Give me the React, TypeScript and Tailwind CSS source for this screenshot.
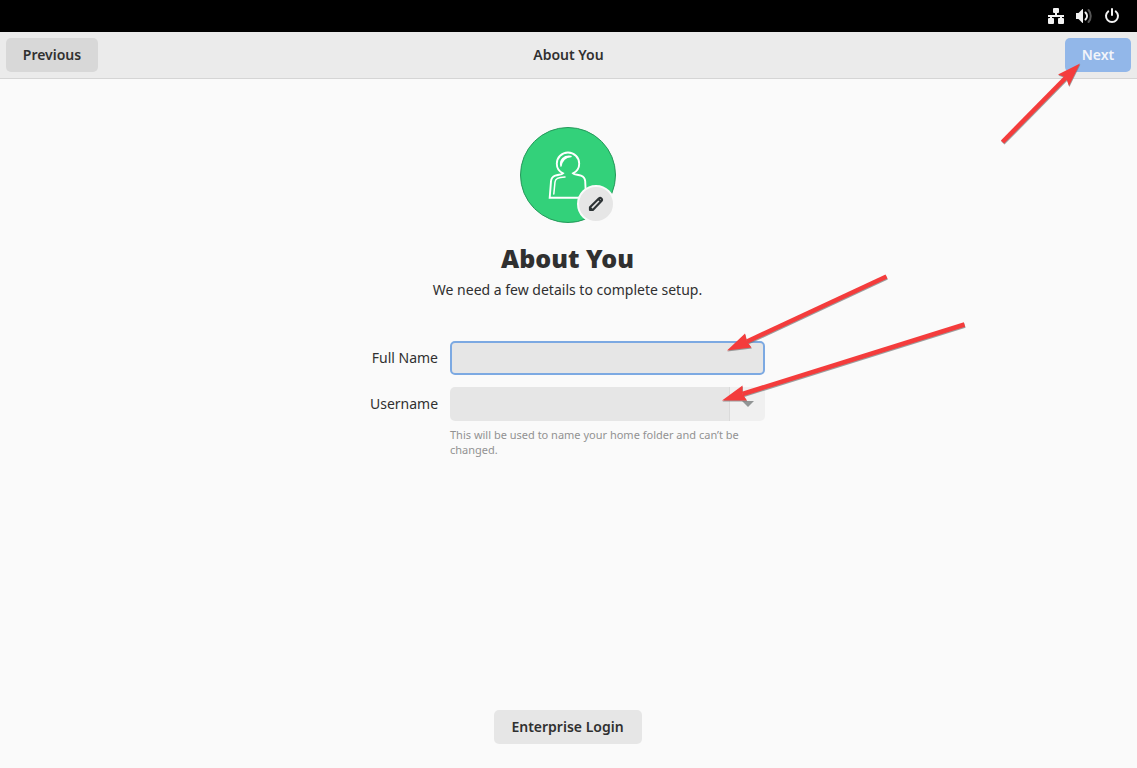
import React from "react";

function NetworkIcon() {
  return (
    <svg width="16" height="16" viewBox="0 0 16 16" fill="#f2f2f2" aria-hidden="true">
      <rect x="5" y="0" width="6" height="5" rx="1" />
      <rect x="0" y="10" width="6" height="6" rx="1" />
      <rect x="10" y="10" width="6" height="6" rx="1" />
      <path d="M7 5h2v2h7v2h-2v1h-2V9H4v1H2V9H0V7h7z" />
    </svg>
  );
}

function VolumeIcon() {
  return (
    <svg width="16" height="16" viewBox="0 0 16 16" fill="none" aria-hidden="true">
      <path d="M0 5h2.500L6.500 1H7v14h-.5L2.500 11H0z" fill="#f2f2f2" />
      <path d="M9.500 4.500c2 2 2 5 0 7" stroke="#f2f2f2" strokeWidth="2" strokeLinecap="round" />
      <path d="M12.500 2c3 3.400 3 8.600 0 12" stroke="#565656" strokeWidth="2" strokeLinecap="round" />
    </svg>
  );
}

function PowerIcon() {
  return (
    <svg width="16" height="16" viewBox="0 0 16 16" fill="none" stroke="#f2f2f2" strokeWidth="2" strokeLinecap="round" aria-hidden="true">
      <path d="M4.200 3.400a6 6 0 1 0 7.600 0M8 1v6" />
    </svg>
  );
}

function Person() {
  return (
    <svg className="h-full w-full" viewBox="0 0 96 96" fill="none" stroke="white" aria-hidden="true">
      <circle cx="48" cy="48" r="47.500" fill="#33d17a" stroke="#25985a" />
      <path
        d="M43 46.300C39 44.300 36.800 41 36.800 36.700a11.200 11.200 0 0 1 22.400 0c0 4.300-2.200 7.600-6.200 9.600 1.500 1.600 5 1.200 8 2.400 3 1.200 4 3 4.200 5.500L66 70.700H29.700L31 54.200c.2-2.500 1.200-4.300 4.200-5.500 3-1.200 6.300-.8 7.800-2.400z"
        strokeWidth="1.900"
        strokeLinejoin="miter"
      />
      <path d="M41 39c-1.500-6 3-10.500 10-9.500-5 .5-9 3.500-10 9.500zM33.800 67l1.200-12c.3-3.500 3-4.500 10-5" strokeWidth="1.500" strokeLinecap="round" strokeLinejoin="round" />
    </svg>
  );
}

function PencilIcon() {
  return (
    <svg width="16" height="16" viewBox="0 0 16 16" fill="none" stroke="#2e3436" strokeWidth="2.200" strokeLinejoin="round" aria-hidden="true">
      <path d="M2 14v-2.800L10.800 2.500c1.800-1.600 4.200.6 2.600 2.500L4.800 14z" />
      <path d="M10.300 3L13 5.600M2 11.500L4.500 14" strokeWidth="2" />
    </svg>
  );
}

type Point = [number, number];

function Arrow({ tail, neck, tip, barbs }: { tail: Point; neck: Point; tip: Point; barbs: [Point, Point] }) {
  const head = [tip, barbs[0], neck, barbs[1]].join(" ");
  return (
    <>
      <g transform="translate(0.4 1)" fill="#777" stroke="#777" opacity="0.7">
        <line x1={tail[0]} y1={tail[1]} x2={neck[0]} y2={neck[1]} strokeWidth="4.600" />
        <polygon points={head} stroke="none" />
      </g>
      <line x1={tail[0]} y1={tail[1]} x2={neck[0]} y2={neck[1]} stroke="#f43c3c" strokeWidth="4.600" />
      <polygon points={head} fill="#f43c3c" />
    </>
  );
}

export default function App() {
  return (
    <div className="flex min-h-screen flex-col bg-[#fafafa] font-['Noto_Sans','Open_Sans',sans-serif] text-sm text-[#303030]">
      <div className="flex h-8 items-center justify-end gap-3 bg-black px-[17px]">
        <NetworkIcon />
        <VolumeIcon />
        <PowerIcon />
      </div>

      <header className="grid grid-cols-3 items-center border-b border-[#d5d5d5] bg-[#ebebeb] px-1.5 py-1.5 font-semibold">
        <button type="button" className="h-[34px] w-[92px] justify-self-start rounded-[5px] bg-[#d8d8d8]">
          Previous
        </button>
        <h2 className="text-center">About You</h2>
        <div className="relative justify-self-end">
          <button type="button" className="h-[34px] w-[66px] rounded-[5px] bg-[#92b7e9] text-[#f2f5fa]">
            Next
          </button>
          <svg className="pointer-events-none absolute top-6 right-12 z-10 h-[84px] w-[84px]" viewBox="999 62 84 84" aria-hidden="true">
            <Arrow tail={[1002.5, 142]} neck={[1066, 77.5]} tip={[1080, 63.5]} barbs={[[1058, 74.5], [1069, 86]]} />
          </svg>
        </div>
      </header>

      <main className="flex flex-1 flex-col items-center pt-12 pr-0.5 pb-6">
        <div className="relative h-24 w-24">
          <Person />
          <button
            type="button"
            aria-label="Change picture"
            className="absolute right-px bottom-0 flex h-[38px] w-[38px] items-center justify-center rounded-full border-2 border-[#fafafa] bg-[#e6e6e6]"
          >
            <PencilIcon />
          </button>
        </div>

        <h1 className="mt-5 text-[25px] leading-[30px] font-black">About You</h1>
        <p className="mt-1.5 text-sm leading-[22px]">We need a few details to complete setup.</p>

        <form className="relative mt-10 grid grid-cols-[68px_315px] items-center gap-x-3">
          <label htmlFor="full-name" className="text-right whitespace-nowrap">
            Full Name
          </label>
          <input id="full-name" type="text" className="h-[34px] rounded-[5px] border-2 border-[#7ca9e2] bg-[#e6e6e6] px-2 outline-none" />
          <label htmlFor="username" className="mt-3 text-right whitespace-nowrap">
            Username
          </label>
          <div className="mt-3 flex h-[34px] overflow-hidden rounded-[5px]">
            <input id="username" type="text" className="min-w-0 flex-1 bg-[#e6e6e6] px-2 outline-none" />
            <button type="button" aria-label="Suggested usernames" className="flex w-9 items-center justify-center border-l border-[#dadada] bg-[#f0f0f0]">
              <svg width="12" height="6" viewBox="0 0 12 6" fill="#929595" aria-hidden="true">
                <path d="M0 0h12L6 6z" />
              </svg>
            </button>
          </div>
          <p className="col-start-2 mt-1.5 text-[11px] leading-[15px] text-[#929292]">
            This will be used to name your home folder and can’t be changed.
          </p>
          <svg className="pointer-events-none absolute -top-[71px] left-[345px] h-[140px] w-[260px]" viewBox="715 270 260 140" aria-hidden="true">
            <Arrow tail={[886.5, 276.5]} neck={[747, 341.5]} tip={[727, 350.5]} barbs={[[745, 333.5], [751.5, 347.5]]} />
            <Arrow tail={[964.5, 324.5]} neck={[742.5, 394]} tip={[722, 400.5]} barbs={[[742.5, 385.5], [747, 400.5]]} />
          </svg>
        </form>

        <button type="button" className="mt-auto h-[34px] w-[148px] rounded-[5px] bg-[#e6e6e6] font-semibold">
          Enterprise Login
        </button>
      </main>
    </div>
  );
}
